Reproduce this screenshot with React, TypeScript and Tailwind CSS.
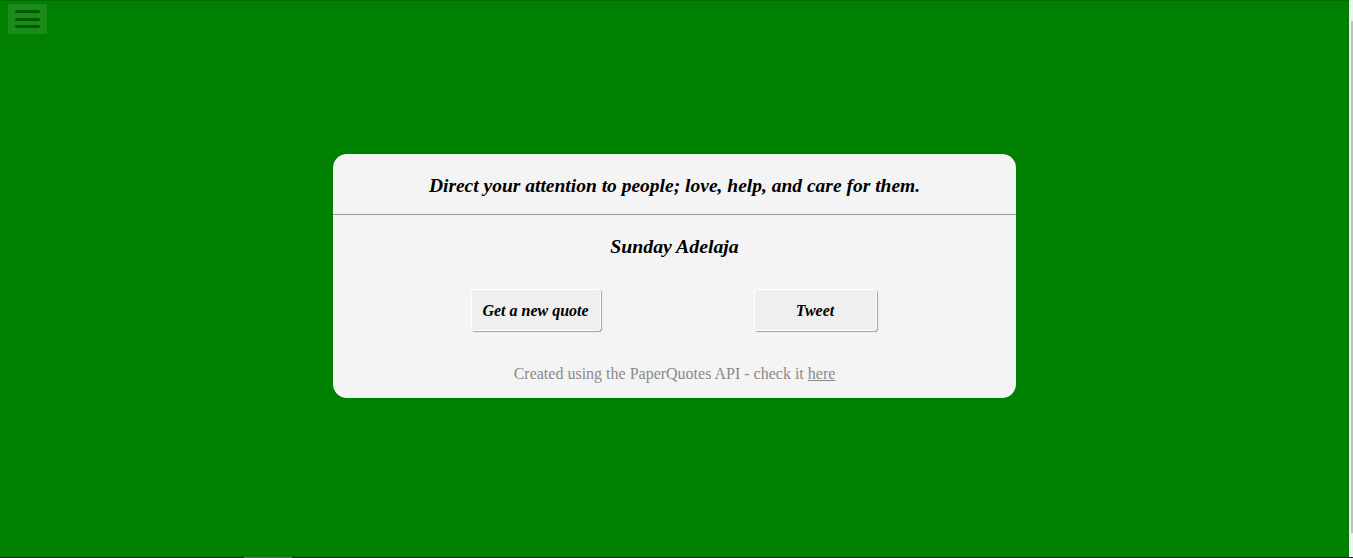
import React from "react";

export default function App() {
  return (
    <div className="flex h-[558px] w-[1353px] flex-col overflow-hidden">
      <div className="flex min-h-0 flex-1">
        <main className="relative flex flex-1 flex-col items-center border-t border-[#006a00] bg-[#008000] pt-[153px]">
          <button className="absolute left-[8px] top-[3px] flex h-[30px] w-[39px] flex-col items-center justify-center gap-[4.5px] bg-[#1a8c1a]">
            <span className="h-[3px] w-[25px] rounded-full bg-[#005a00]" />
            <span className="h-[3px] w-[25px] rounded-full bg-[#005a00]" />
            <span className="h-[3px] w-[25px] rounded-full bg-[#005a00]" />
          </button>
          <div className="flex h-[244px] w-[683px] flex-col rounded-[14px] bg-[#f4f4f4] font-['Liberation_Serif',serif]">
            <div className="flex h-[61px] items-center justify-center border-b border-[#9a9a9a] pt-[3px]">
              <p className="text-[19.5px] font-bold italic text-black">
                Direct your attention to people; love, help, and care for them.
              </p>
            </div>
            <p className="mt-[20px] text-center text-[19.8px] font-bold italic leading-[22px] text-black">
              Sunday Adelaja
            </p>
            <div className="mt-[32px] flex justify-center gap-[153px] pr-[2px]">
              <button className="h-[42px] w-[130px] rounded-[3px] border border-white bg-[#efefef] pt-[2px] text-[16px] font-bold italic text-black shadow-[1px_1px_1px_#a0a0a0]">
                Get a new quote
              </button>
              <button className="h-[42px] w-[123px] rounded-[3px] border border-white bg-[#efefef] pt-[2px] text-[16px] font-bold italic text-black shadow-[1px_1px_1px_#a0a0a0]">
                Tweet
              </button>
            </div>
            <p className="mt-[31px] text-center text-[16px] text-[#8a8a8a]">
              Created using the PaperQuotes API - check it <span className="underline">here</span>
            </p>
          </div>
        </main>
        <div className="flex w-[4px] flex-col bg-[#f1f1f1] pt-[21px] pb-[24px]">
          <div className="ml-auto w-[2px] flex-1 bg-[#c1c1c1]" />
        </div>
      </div>
      <div className="flex h-[1px] bg-[#1b2b2b]">
        <div className="ml-[244px] w-[48px] bg-[#5a6a6a]" />
      </div>
    </div>
  );
}
